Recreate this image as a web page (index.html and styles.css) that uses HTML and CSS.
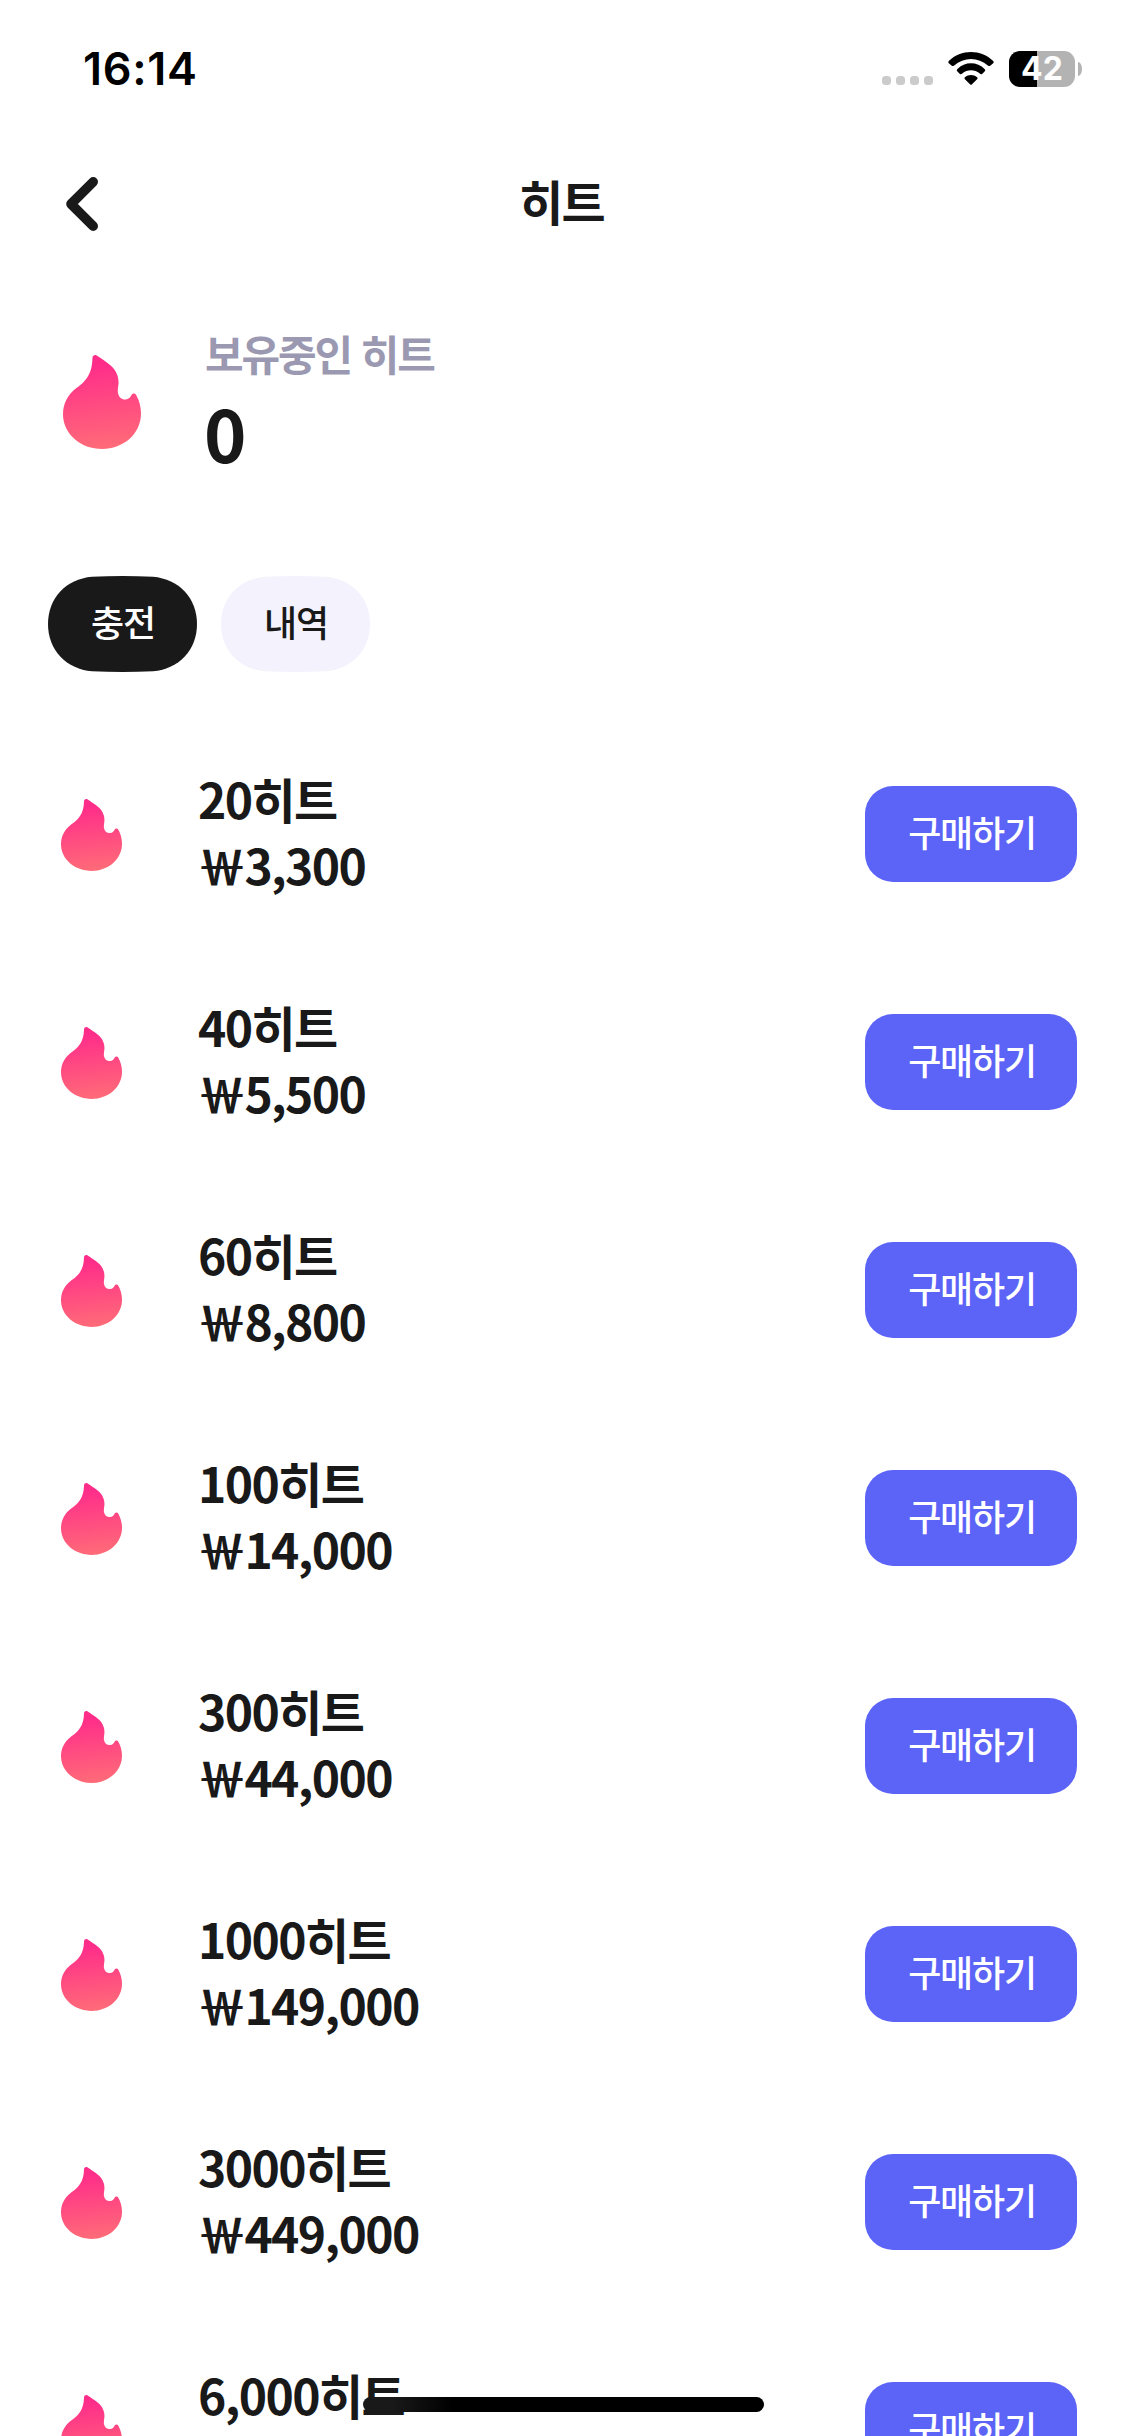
FILE: index.html
```html
<!DOCTYPE html>
<html lang="ko">
<head>
<meta charset="utf-8">
<title>히트</title>
<link rel="stylesheet" href="styles.css">
</head>
<body>
<svg class="defs" width="0" height="0" aria-hidden="true">
  <defs>
    <linearGradient id="heat" x1="0.4" y1="0" x2="0.5" y2="1">
      <stop offset="0.1" stop-color="#ff2d8a"/>
      <stop offset="1" stop-color="#ff6b78"/>
    </linearGradient>
    <symbol id="flame" viewBox="0 0 233 281" preserveAspectRatio="none">
      <path fill="url(#heat)" d="M88 8C89 1 96-2 102 2C125 19 154 32 163 62C170 87 162 96 164 112C166 126 176 134 187 133C198 132 202 125 205 119C209 113 216 114 219 120C228 137 233 155 233 175C233 236 180 281 117 281C53 281 0 236 0 177C0 145 15 118 40 99C66 80 87 60 88 8Z"/>
    </symbol>
  </defs>
</svg>
<div class="screen">
  <div class="status">
    <span class="time">16:14</span>
    <div class="indicators">
      <div class="dots"><i></i><i></i><i></i><i></i></div>
      <svg class="wifi" viewBox="0 0 136 98">
        <path d="M2 27C38-9 98-9 134 27Q137 31 133 34L125 41Q122 43 118 40C90 14 46 14 18 40Q14 43 11 41L3 34Q-1 31 2 27Z"/>
        <path d="M27 51C50 28 86 28 109 51Q112 54 109 57L101 65Q98 67 94 64C79 51 57 51 42 64Q38 67 35 65L27 57Q24 54 27 51Z"/>
        <path d="M50 75C60 66 76 66 86 75Q89 78 86 81L71 96Q68 99 65 96L50 81Q47 78 50 75Z"/>
      </svg>
      <div class="battery"><span class="cell">42</span><span class="cap"></span></div>
    </div>
  </div>
  <header class="header">
    <svg class="back" viewBox="0 0 32 54"><path d="M27.2 4.8L5 27L27.2 49.2"/></svg>
    <h1>히트</h1>
  </header>
  <section class="balance">
    <svg class="flame-lg"><use href="#flame"/></svg>
    <div>
      <p class="label">보유중인 히트</p>
      <p class="amount">0</p>
    </div>
  </section>
  <nav class="tabs">
    <span class="tab active">충전</span>
    <span class="tab">내역</span>
  </nav>
  <main class="list">
    <div class="row"><svg class="flame"><use href="#flame"/></svg><div class="info"><p>20히트</p><p class="price">￦3,300</p></div><button>구매하기</button></div>
    <div class="row"><svg class="flame"><use href="#flame"/></svg><div class="info"><p>40히트</p><p class="price">￦5,500</p></div><button>구매하기</button></div>
    <div class="row"><svg class="flame"><use href="#flame"/></svg><div class="info"><p>60히트</p><p class="price">￦8,800</p></div><button>구매하기</button></div>
    <div class="row"><svg class="flame"><use href="#flame"/></svg><div class="info"><p>100히트</p><p class="price">￦14,000</p></div><button>구매하기</button></div>
    <div class="row"><svg class="flame"><use href="#flame"/></svg><div class="info"><p>300히트</p><p class="price">￦44,000</p></div><button>구매하기</button></div>
    <div class="row"><svg class="flame"><use href="#flame"/></svg><div class="info"><p>1000히트</p><p class="price">￦149,000</p></div><button>구매하기</button></div>
    <div class="row"><svg class="flame"><use href="#flame"/></svg><div class="info"><p>3000히트</p><p class="price">￦449,000</p></div><button>구매하기</button></div>
    <div class="row"><svg class="flame"><use href="#flame"/></svg><div class="info"><p>6,000히트</p></div><button>구매하기</button></div>
  </main>
  <div class="home-bar"></div>
</div>
</body>
</html>
```
FILE: styles.css
```css
* { box-sizing: border-box; margin: 0; padding: 0; }
body { background: #fff; color: #191919; font-family: "Noto Sans CJK KR", sans-serif; }
.defs { position: absolute; }
.screen { position: relative; width: 1125px; height: 2436px; overflow: hidden; }

.status { height: 141px; padding: 0 43px 0 83px; display: flex; justify-content: space-between; align-items: flex-start; color: #000; }
.time { margin-top: 42px; font: 600 45px/54px Inter, sans-serif; letter-spacing: 0.7px; }
.indicators { display: flex; align-items: flex-start; margin-top: 51px; }
.dots { display: flex; gap: 5px; margin: 25px 15px 0 0; }
.dots i { width: 9px; height: 9px; border-radius: 3.5px; background: #cbcbcb; }
.wifi { width: 46px; height: 33px; margin: 1px 15px 0 0; }
.battery { display: flex; align-items: center; gap: 3px; }
.cell { width: 66px; height: 36px; border-radius: 11px; background: linear-gradient(90deg, #000 28px, #b3b3b3 28px); color: #fff; font: 700 32px/36px Inter, sans-serif; text-align: center; }
.cap { width: 4px; height: 14px; border-radius: 0 4px 4px 0 / 0 7px 7px 0; background: #b3b3b3; }

.header { height: 126px; padding: 0 66px; display: grid; grid-template-columns: 32px 1fr 32px; align-items: center; }
.back { width: 32px; height: 54px; fill: none; stroke: #191919; stroke-width: 9.6; stroke-linecap: round; stroke-linejoin: round; }
h1 { font-size: 48px; font-weight: 700; line-height: 68px; letter-spacing: -1.8px; text-align: center; margin: -8px 34px 0 32px; }

.balance { height: 309px; padding: 55px 63px 0; display: flex; gap: 64px; }
.flame-lg { width: 78px; height: 94px; margin-top: 33px; }
.label { font-size: 42px; font-weight: 700; line-height: 62px; letter-spacing: -2.1px; color: #9b99b1; }
.amount { font-size: 72px; font-weight: 700; line-height: 100px; margin: -2px 0 0 -1px; }

.tabs { height: 144px; padding: 0 48px; display: flex; gap: 24px; }
.tab { width: 149px; height: 96px; padding-left: 1px; font-size: 36px; font-weight: 500; line-height: 90px; letter-spacing: -1px; text-align: center; background: #f4f2fc; clip-path: path("M0 48C0 22 18 3 44 .7Q74.5-.5 105 .7C131 3 149 22 149 48C149 74 131 93 105 95.3Q74.5 96.5 44 95.3C18 93 0 74 0 48Z"); }
.tab.active { background: #191919; color: #fff; }

.row { height: 228px; padding: 0 48px 0 61px; display: flex; align-items: center; }
.flame { width: 61px; height: 72px; margin-top: 2px; }
.info { flex: 1; height: 134px; margin: -4px 0 0 76px; font-size: 48px; font-weight: 700; line-height: 67px; letter-spacing: -1.6px; }
.price { margin-top: -1px; }
button { width: 212px; height: 96px; border: 0; border-radius: 28px; background: #5c63f7; color: #fff; font: 500 36px/90px "Noto Sans CJK KR", sans-serif; letter-spacing: -1.2px; padding: 0 0 6px 2px; }

.home-bar { position: absolute; left: 363px; top: 2397px; width: 401px; height: 15px; border-radius: 8px; background: linear-gradient(90deg, #191919 0, #191919 30px, #000 90px); }
```
